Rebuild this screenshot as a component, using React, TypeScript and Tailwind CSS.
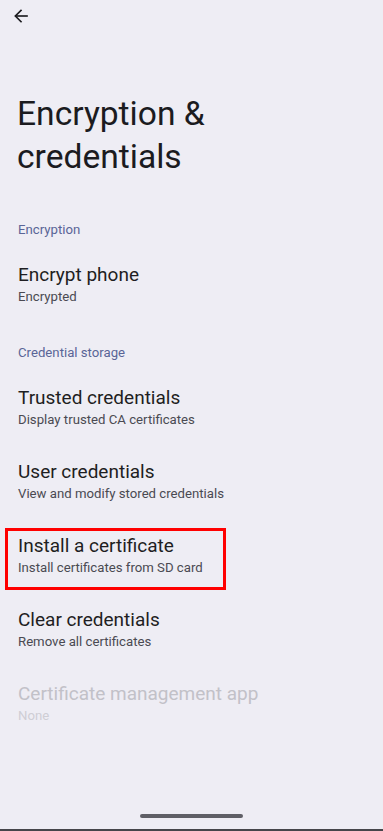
import React from "react";

const font = { fontFamily: "Roboto, 'Noto Sans', sans-serif" };

function Item({ title, sub, disabled = false, boxed = false }: { title: string; sub: string; disabled?: boolean; boxed?: boolean }) {
  return (
    <div className="relative px-[18px] py-[15px]">
      {boxed && (
        <div className="absolute left-[5px] top-[9px] w-[221px] h-[62px] border-[3px] border-[#ff0000]" />
      )}
      <div className={`text-[19px] leading-[24px] ${disabled ? "text-[#c2c1c8]" : "text-[#1e1e22]"}`}>{title}</div>
      <div className={`text-[13.2px] leading-[20px] ${disabled ? "text-[#cfced4]" : "text-[#4a4a52]"}`}>{sub}</div>
    </div>
  );
}

function Header({ text }: { text: string }) {
  return <div className="px-[18px] text-[13.2px] leading-[20px] text-[#5a6597] mb-[8px]">{text}</div>;
}

export default function App() {
  return (
    <div className="w-[383px] h-[831px] bg-[#eeedf4] flex flex-col overflow-hidden" style={font}>
      <div className="h-[32px] flex items-center pl-[12px]">
        <svg width="18" height="18" viewBox="0 0 24 24" fill="none" stroke="#1b1b1f" strokeWidth="2.2" strokeLinecap="square">
          <path d="M20 12H5" />
          <path d="M12 4.5L4.5 12L12 19.5" />
        </svg>
      </div>
      <div className="mt-[60px] px-[17px] text-[33.6px] leading-[43px] text-[#1b1b1f]">
        Encryption &amp;
        <br />
        credentials
      </div>
      <div className="mt-[42px]">
        <Header text="Encryption" />
        <Item title="Encrypt phone" sub="Encrypted" />
      </div>
      <div className="mt-[21px]">
        <Header text="Credential storage" />
        <Item title="Trusted credentials" sub="Display trusted CA certificates" />
        <Item title="User credentials" sub="View and modify stored credentials" />
        <Item title="Install a certificate" sub="Install certificates from SD card" boxed />
        <Item title="Clear credentials" sub="Remove all certificates" />
        <Item title="Certificate management app" sub="None" disabled />
      </div>
      <div className="flex-1" />
      <div className="flex justify-center pb-[11px]">
        <div className="w-[103px] h-[4px] rounded-full bg-[#5f5f66]" />
      </div>
      <div className="h-[2px] bg-[#45454a]" />
    </div>
  );
}
